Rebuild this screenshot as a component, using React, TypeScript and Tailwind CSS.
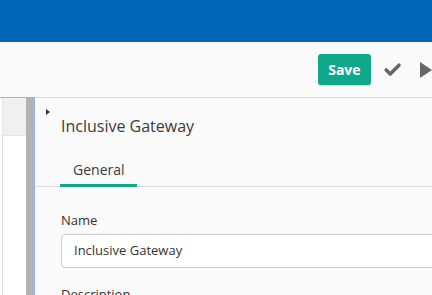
import { Check } from 'lucide-react';

function Toolbar(): React.JSX.Element {
  return (
    <div className="h-[56px] bg-[#fafafa] border-b border-[#dddddd] flex items-center pl-[318px] shrink-0">
      <button className="h-[31px] w-[55px] rounded-[3px] bg-[#10a88a] text-white text-[14px] font-bold shadow-[0_1px_1px_rgba(0,0,0,0.15)]">
        Save
      </button>
      <Check className="ml-[12px] w-[20px] h-[20px] text-[#666666]" strokeWidth={4.5} />
      <svg className="ml-[18px] w-[12px] h-[16px] shrink-0" viewBox="0 0 12 16">
        <path d="M0 0 L12 8 L0 16 Z" fill="#666666" />
      </svg>
    </div>
  );
}

function Canvas(): React.JSX.Element {
  return (
    <div className="w-[35px] shrink-0 flex border-r border-t border-[#8fb4f0] -mt-px">
      <div className="w-[26px] flex flex-col">
        <div className="h-[38px] shrink-0 bg-[#f0f0f0] border-b border-[#e4e4e4] border-l-[1px] ml-[2px]" />
        <div className="flex-1 bg-white border-l border-[#e0e0e0] ml-[2px]" />
      </div>
      <div className="w-[8px] bg-[#b3b3b3]" />
    </div>
  );
}

function PropertiesPanel(): React.JSX.Element {
  return (
    <div className="flex-1 bg-[#fafafa] flex flex-col text-[#333333] overflow-hidden">
      <div className="pl-[11px] pt-[11px] h-[18px] shrink-0">
        <div className="w-0 h-0 border-y-[3px] border-y-transparent border-l-[4px] border-l-[#333333]" />
      </div>
      <div className="pl-[26px] text-[16px] leading-[20px] font-medium text-[#3a3a3a] shrink-0">Inclusive Gateway</div>
      <div className="mt-[11px] border-b border-[#dddddd] pl-[25px] h-[40px] flex shrink-0">
        <div className="w-[77px] border-b-[3px] border-[#10a88a] text-[14px] leading-[21px] pl-[13px] pt-[12px] -mb-px font-medium text-[#3a3a3a]">
          General
        </div>
      </div>
      <div className="pl-[26px] pt-[24px] shrink-0">
        <div className="text-[13px] leading-[18px] font-medium">Name</div>
        <div className="mt-[5px] h-[34px] bg-white border border-[#cccccc] rounded-[4px] pl-[12px] text-[13px] flex items-center w-[400px]">
          Inclusive Gateway
        </div>
        <div className="mt-[17px] text-[13px] leading-[18px] font-medium">Description</div>
      </div>
    </div>
  );
}

export default function App(): React.JSX.Element {
  return (
    <div className="w-[432px] h-[295px] overflow-hidden flex flex-col bg-white font-['Open_Sans',sans-serif]">
      <div className="h-[42px] bg-[#0066b8] shrink-0" />
      <Toolbar />
      <div className="flex flex-1 min-h-0">
        <Canvas />
        <PropertiesPanel />
      </div>
    </div>
  );
}
